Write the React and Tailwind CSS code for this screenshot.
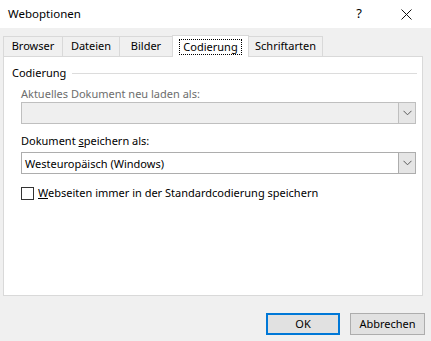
import React from "react";

const font = { fontFamily: '"Noto Sans", "Open Sans", sans-serif' };

function Chevron() {
  return (
    <svg width="9" height="6" viewBox="0 0 9 6" fill="none">
      <path d="M0.5 0.8 L4.5 4.8 L8.5 0.8" stroke="#5a5a5a" strokeWidth="1" />
    </svg>
  );
}

function Combo({ disabled, value }) {
  return (
    <div
      className={`ml-[17px] w-[395px] h-[22px] flex border ${
        disabled ? "border-[#bfbfbf] bg-[#efefef]" : "border-[#adadad] bg-white"
      }`}
    >
      <div className="flex-1 flex items-center pl-[3px] text-[11px] text-black leading-none">
        {value}
      </div>
      <div
        className={`w-[17px] h-full flex items-center justify-center border-l ${
          disabled ? "border-[#bfbfbf] bg-[#e6e6e6]" : "border-[#adadad] bg-[#e5e5e5]"
        }`}
      >
        <Chevron />
      </div>
    </div>
  );
}

export default function App() {
  const tabs = [
    { label: "Browser", w: "w-[59px]" },
    { label: "Dateien", w: "w-[57px]" },
    { label: "Bilder", w: "w-[53px]" },
  ];
  return (
    <div
      className="w-[431px] h-[341px] bg-[#f0f0f0] flex flex-col text-black overflow-hidden"
      style={font}
    >
      {/* title bar */}
      <div className="h-[28px] bg-white flex items-center shrink-0">
        <div className="pl-[8px] text-[11.5px] flex-1">Weboptionen</div>
        <div className="w-[30px] text-[13px] text-center mr-[17px]">?</div>
        <div className="w-[30px] flex justify-center mr-[10px]">
          <svg width="11" height="11" viewBox="0 0 11 11">
            <path d="M0.5 0.5 L10.5 10.5 M10.5 0.5 L0.5 10.5" stroke="#111" strokeWidth="1" />
          </svg>
        </div>
      </div>

      {/* tabs */}
      <div className="mt-[7px] h-[21px] flex items-end pl-[3px] shrink-0 relative z-10">
        {tabs.map((t) => (
          <div
            key={t.label}
            className={`${t.w} h-[20px] border-t border-l border-[#d9d9d9] bg-[#f0f0f0] flex items-center justify-center text-[11px]`}
          >
            {t.label}
          </div>
        ))}
        <div className="w-[77px] h-[22px] -mb-px border border-b-0 border-[#d9d9d9] bg-white flex items-center justify-center">
          <span className="px-[3px] h-[16px] flex items-center border border-dotted border-black text-[11px] leading-none">
            Codierung
          </span>
        </div>
        <div className="w-[74px] h-[20px] border-t border-r border-[#d9d9d9] bg-[#f0f0f0] flex items-center justify-center text-[11px]">
          Schriftarten
        </div>
      </div>

      {/* panel */}
      <div className="ml-[3px] w-[420px] h-[240px] border border-[#d9d9d9] bg-white shrink-0 flex flex-col">
        <div className="mt-[8px] h-[16px] flex items-center pl-[8px] pr-[5px]">
          <span className="text-[11px]">Codierung</span>
          <div className="flex-1 ml-[6px] h-px bg-[#dcdcdc]" />
        </div>
        <div className="mt-[5px] h-[16px] flex items-center pl-[17px] text-[11px] text-[#6d6d6d]">
          Aktuelles Dokument neu laden als:
        </div>
        <div className="mt-0">
          <Combo disabled value="" />
        </div>
        <div className="mt-[9px] h-[16px] flex items-center pl-[17px] text-[11px]">
          Dokument&nbsp;<span className="underline">s</span>peichern als:
        </div>
        <div className="mt-[3px]">
          <Combo value="Westeuropäisch (Windows)" />
        </div>
        <div className="mt-[12px] ml-[17px] flex items-center h-[14px]">
          <div className="w-[13px] h-[13px] border border-[#333] bg-white" />
          <span className="ml-[4px] text-[11px]">
            <span className="underline">W</span>ebseiten immer in der Standardcodierung speichern
          </span>
        </div>
      </div>

      {/* buttons */}
      <div className="mt-[17px] flex pl-[266px] gap-[10px]">
        <div className="w-[74px] h-[22px] border-2 border-[#0078d7] bg-[#e1e1e1] flex items-center justify-center text-[11px]">
          OK
        </div>
        <div className="w-[75px] h-[22px] border border-[#adadad] bg-[#e1e1e1] flex items-center justify-center text-[11px]">
          Abbrechen
        </div>
      </div>
    </div>
  );
}
